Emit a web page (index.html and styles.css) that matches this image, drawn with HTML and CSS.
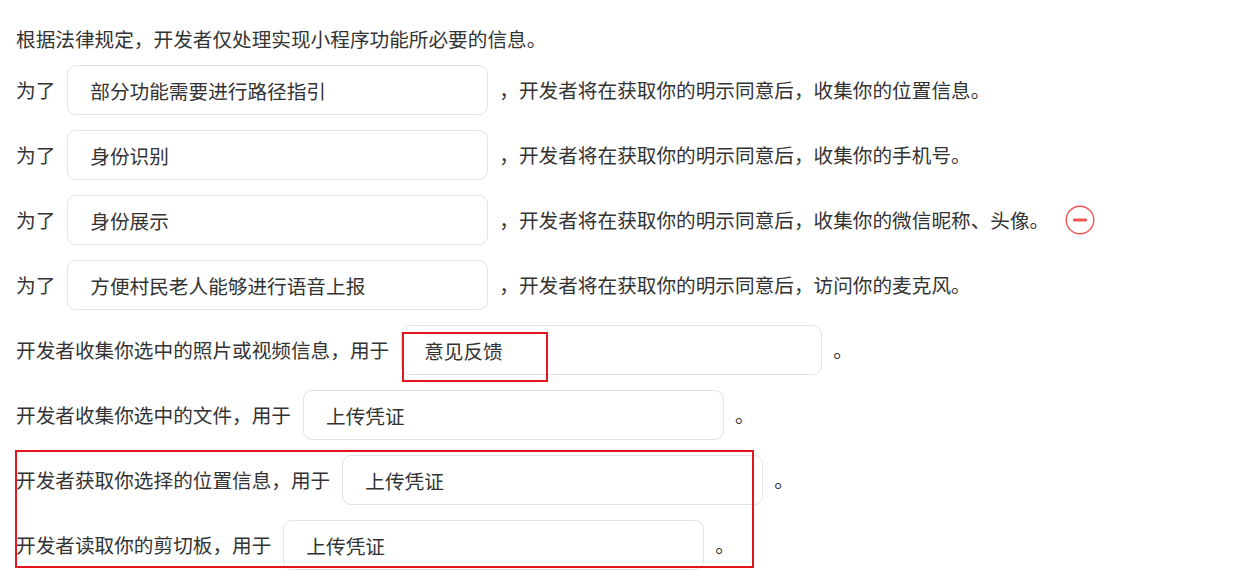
FILE: index.html
```html
<!DOCTYPE html>
<html lang="zh-CN">
<head>
<meta charset="utf-8">
<title>用户隐私保护指引</title>
<link rel="stylesheet" href="styles.css">
</head>
<body>
<div class="page">
  <p class="intro">根据法律规定，开发者仅处理实现小程序功能所必要的信息。</p>
  <div class="rows">
    <div class="row">
      <span class="label">为了</span>
      <div class="field">部分功能需要进行路径指引</div>
      <span class="tail">，开发者将在获取你的明示同意后，收集你的位置信息。</span>
    </div>
    <div class="row">
      <span class="label">为了</span>
      <div class="field">身份识别</div>
      <span class="tail">，开发者将在获取你的明示同意后，收集你的手机号。</span>
    </div>
    <div class="row">
      <span class="label">为了</span>
      <div class="field">身份展示</div>
      <span class="tail">，开发者将在获取你的明示同意后，收集你的微信昵称、头像。</span>
      <span class="remove" aria-label="删除">
        <svg viewBox="0 0 30 30" width="30" height="30"><circle cx="15" cy="15" r="13.8" fill="none" stroke="#f05454" stroke-width="1.4"/><rect x="8" y="13.5" width="14" height="3" rx="1" fill="#f05454"/></svg>
      </span>
    </div>
    <div class="row">
      <span class="label">为了</span>
      <div class="field">方便村民老人能够进行语音上报</div>
      <span class="tail">，开发者将在获取你的明示同意后，访问你的麦克风。</span>
    </div>
    <div class="row">
      <span class="label">开发者收集你选中的照片或视频信息，用于</span>
      <div class="field">意见反馈</div>
      <span class="tail">。</span>
    </div>
    <div class="row">
      <span class="label">开发者收集你选中的文件，用于</span>
      <div class="field">上传凭证</div>
      <span class="tail">。</span>
    </div>
    <div class="row">
      <span class="label">开发者获取你选择的位置信息，用于</span>
      <div class="field">上传凭证</div>
      <span class="tail">。</span>
    </div>
    <div class="row">
      <span class="label">开发者读取你的剪切板，用于</span>
      <div class="field">上传凭证</div>
      <span class="tail">。</span>
    </div>
  </div>
  <div class="mark mark-feedback"></div>
  <div class="mark mark-group"></div>
</div>
</body>
</html>
```

FILE: styles.css
```css
* {
  box-sizing: border-box;
}

html, body {
  margin: 0;
  padding: 0;
  background: #ffffff;
}

body {
  font-family: "Noto Sans CJK SC", "Noto Sans", sans-serif;
  font-size: 19.65px;
  color: #333333;
}

.page {
  position: relative;
  padding: 24px 0 0 16px;
  min-height: 581px;
}

.intro {
  margin: 0 0 11px 0;
  line-height: 30px;
  height: 30px;
}

.rows {
  display: flex;
  flex-direction: column;
  gap: 15px;
}

.row {
  display: flex;
  align-items: center;
  height: 50px;
  white-space: nowrap;
}

.label {
  line-height: 30px;
}

.field {
  width: 421px;
  height: 50px;
  margin: 0 11px 0 12px;
  padding: 0 22px;
  border: 1px solid #e3e3e3;
  border-radius: 9px;
  display: flex;
  align-items: center;
  color: #333333;
  background: #ffffff;
}

.tail {
  line-height: 30px;
}

.remove {
  display: flex;
  width: 30px;
  height: 30px;
  margin-left: 16px;
}

.mark {
  position: absolute;
  border: 2px solid #e3161f;
  pointer-events: none;
}

.mark-feedback {
  left: 402px;
  top: 332px;
  width: 146px;
  height: 50px;
}

.mark-group {
  left: 15px;
  top: 450px;
  width: 739px;
  height: 118px;
}
```
